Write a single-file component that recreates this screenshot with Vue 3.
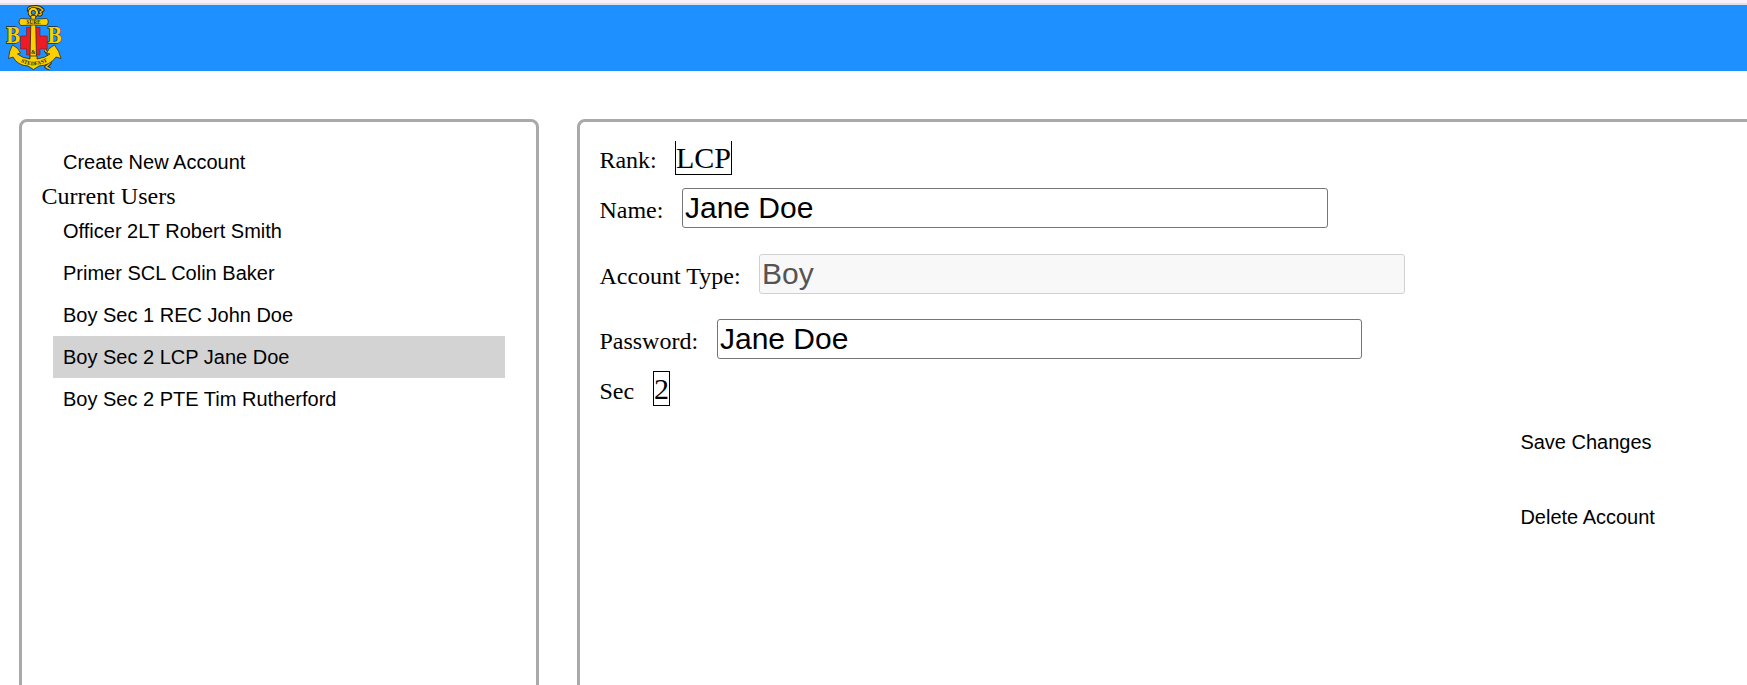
<script setup>
import { ref } from 'vue'

const users = [
  'Officer 2LT Robert Smith',
  'Primer SCL Colin Baker',
  'Boy Sec 1 REC John Doe',
  'Boy Sec 2 LCP Jane Doe',
  'Boy Sec 2 PTE Tim Rutherford',
]
const selected = ref(3)
const name = ref('Jane Doe')
const accountType = ref('Boy')
const password = ref('Jane Doe')
</script>

<template>
  <div class="page">
    <div class="strip"></div>
    <header class="navbar">
      <svg class="logo" viewBox="0 0 58 66" width="58" height="66">
        <g stroke="#2a2a1c" stroke-width="0.8" stroke-linejoin="round">
          <path d="M25 7 C22 4 24 1.500 29 2 C33 1 36 3 38 5 L35 7 C38 9 35 11 33 9 M40 45 l4 5 -2 4 3 4 -4 4 4 2" fill="none" stroke-width="3.400" />
          <path d="M25 7 C22 4 24 1.500 29 2 C33 1 36 3 38 5 L35 7 C38 9 35 11 33 9 M40 45 l4 5 -2 4 3 4 -4 4 4 2" fill="none" stroke="#edbd12" stroke-width="1.400" />
          <path d="M21.500 22.500h13.500v8.500h7.200v13h-7.200v6h-13.500v-6h-6v-13h6z" fill="#ed1c24" stroke="#4a2a50" stroke-width="0.600" />
          <circle cx="28.300" cy="7.500" r="3.600" fill="none" stroke-width="3.800" />
          <circle cx="28.300" cy="7.500" r="3.600" fill="none" stroke="#fcd000" stroke-width="2.200" />
          <path d="M26 10.500h4.500l1 43h-6.500z" fill="#fcd000" />
          <path d="M16 13.500 Q28.500 15 41.500 13.500 Q43.500 14 43.300 17 Q43 20 41 20.500 Q28.500 19.500 16 20.500 Q14 19.500 14 17 Q14 14 16 13.500z" fill="#fcd000" />
          <path d="M3.500 53.500 Q4 46 7.500 40 Q14 43 15.500 48 L12.500 49 Q17 53 25 54 V51 H32 V54 Q40 53 45 49 L41.500 48 Q43 43 49.500 40 Q54.500 46 56 53.500 L51 52 Q45 60.500 34 61 L28.500 64.500 L23 61 Q12.500 60.500 8 52z" fill="#fcd000" />
        </g>
        <text class="initial" x="1" y="38" textLength="14.500" lengthAdjust="spacingAndGlyphs">B</text>
        <text class="initial" x="42.500" y="38" textLength="14.500" lengthAdjust="spacingAndGlyphs">B</text>
        <text class="motto" x="21.500" y="19" textLength="14" lengthAdjust="spacingAndGlyphs">SURE</text>
        <path id="motto-arc" d="M14 56 Q29 65 45 55" fill="none" />
        <text class="motto name-arc"><textPath href="#motto-arc" startOffset="2">STEDFAST</textPath></text>
        <text class="motto name-arc" x="26" y="49">&amp;</text>
      </svg>
    </header>

    <main class="content">
      <section class="panel accounts">
        <button class="item">Create New Account</button>
        <div class="heading">Current Users</div>
        <button
          v-for="(user, i) in users"
          :key="user"
          class="item"
          :class="{ active: i === selected }"
          @click="selected = i"
        >{{ user }}</button>
      </section>

      <section class="panel details">
        <div class="field rank">
          <label>Rank:</label><span class="pick open">LCP</span>
        </div>
        <div class="field name">
          <label>Name:</label><input v-model="name" type="text" />
        </div>
        <div class="field type">
          <label>Account Type:</label><input v-model="accountType" type="text" disabled />
        </div>
        <div class="field password">
          <label>Password:</label><input v-model="password" type="text" />
        </div>
        <div class="field sec">
          <label>Sec</label><span class="pick">2</span>
        </div>
        <div class="actions">
          <button>Save Changes</button>
          <button>Delete Account</button>
        </div>
      </section>
    </main>
  </div>
</template>

<style>
body {
  background: #fff;
}
</style>

<style scoped>
.page {
  width: 100%;
  height: 685px;
  overflow: hidden;
  color: #000;
  font-family: "Liberation Serif", "Times New Roman", serif;
}
.page *,
.page {
  box-sizing: border-box;
}
.strip {
  height: 5px;
  background: #f7f2fa;
  border-bottom: 2px solid #e6e1e8;
}
.navbar {
  height: 66px;
  background: #1e90ff;
}
.logo {
  display: block;
  margin-left: 5px;
  overflow: visible;
}
.initial {
  font: bold 21.5px "DejaVu Serif", serif;
  fill: #fcd000;
  stroke: #2a2a1c;
  stroke-width: 1.4px;
  paint-order: stroke;
}
.motto {
  font: bold 6px "Liberation Serif", serif;
  fill: #2a2410;
}
.name-arc {
  font-size: 5.5px;
}
.content {
  display: flex;
  gap: 38px;
  padding: 48px 0 0 19px;
}
.panel {
  flex: none;
  height: 700px;
  border: 3px solid #a9a9a9;
  border-radius: 8px;
}
.accounts {
  width: 520px;
  padding: 19px 31px 0;
}
button {
  display: block;
  border: 0;
  background: none;
  color: #000;
  font: 20px/42px "Liberation Sans", Arial, sans-serif;
  text-align: left;
  white-space: nowrap;
}
.item {
  width: 452px;
  height: 42px;
  padding: 0 10px;
}
.item.active {
  background: #d3d3d3;
}
.heading {
  height: 27px;
  margin-left: -11.5px;
  font-size: 24px;
  line-height: 27px;
}
.details {
  width: 1250px;
  padding: 19px 19.4px 0;
}
.field {
  display: flex;
  align-items: baseline;
  font-size: 24px;
}
.field label {
  flex: none;
  line-height: 27px;
  white-space: nowrap;
}
.rank { height: 34px; }
.rank label { width: 75.6px; }
.name { margin-top: 13px; height: 40px; }
.name label { width: 82.6px; }
.type { margin-top: 26px; height: 40px; }
.type label { width: 159.6px; }
.password { margin-top: 25px; height: 40px; }
.password label { width: 117.6px; }
.password input { width: 645px; }
.sec { margin-top: 12px; height: 35px; }
.sec label { width: 53.6px; }
.pick {
  border: 1px solid #000;
  font-size: 30px;
  line-height: 33px;
}
.pick.open {
  border-top: 0;
}
input {
  flex: none;
  width: 646px;
  height: 40px;
  padding: 1px 2px;
  border: 1px solid #767676;
  border-radius: 3px;
  background: #fff;
  color: #000;
  font: 30px "Liberation Sans", Arial, sans-serif;
}
input:disabled {
  background: #f8f8f8;
  border-color: #d1d1d1;
  color: #545454;
}
.actions {
  display: flex;
  flex-direction: column;
  gap: 33px;
  margin: 15px 0 0 921px;
}
.actions button {
  padding: 0;
}
</style>
